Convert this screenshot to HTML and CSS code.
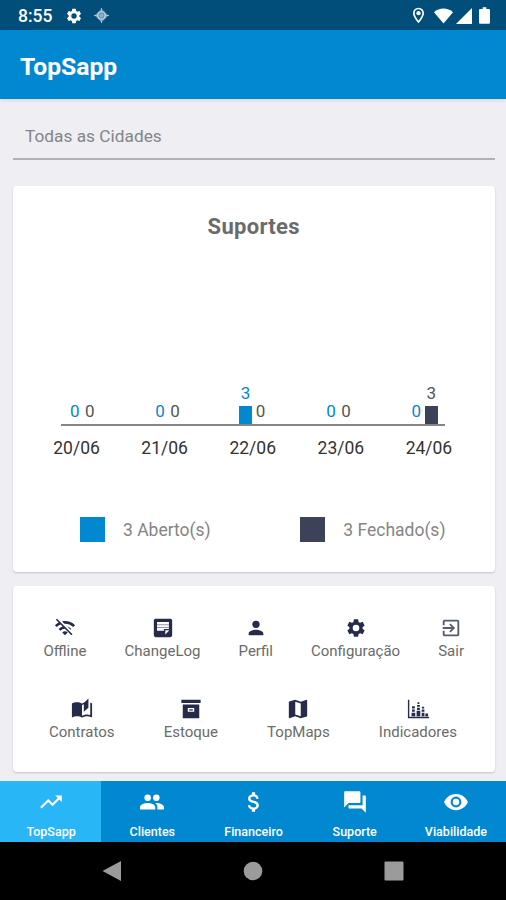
FILE: index.html
```html
<!DOCTYPE html>
<html lang="pt-BR">
<head>
    <meta charset="utf-8">
    <title>TopSapp</title>
    <link rel="stylesheet" href="styles.css">
</head>
<body>
    <div class="status-bar">
        <span class="clock">8:55</span>
        <svg class="status-gear" viewBox="0 0 24 24"><path d="M19.14 12.94c.04-.3.06-.61.06-.94s-.02-.64-.07-.94l2.03-1.58a.5.5 0 0 0 .12-.61l-1.92-3.32a.49.49 0 0 0-.59-.22l-2.39.96a7 7 0 0 0-1.62-.94l-.36-2.54a.48.48 0 0 0-.48-.41h-3.84a.47.47 0 0 0-.47.41l-.36 2.54c-.59.24-1.13.57-1.62.94l-2.39-.96a.48.48 0 0 0-.59.22L2.74 8.87a.47.47 0 0 0 .12.61l2.03 1.58a6 6 0 0 0 0 1.88l-2.03 1.58a.5.5 0 0 0-.12.61l1.92 3.32c.12.22.37.29.59.22l2.39-.96c.5.38 1.03.7 1.62.94l.36 2.54c.05.24.24.41.48.41h3.84c.24 0 .44-.17.47-.41l.36-2.54c.59-.24 1.13-.56 1.62-.94l2.39.96c.22.08.47 0 .59-.22l1.92-3.32a.47.47 0 0 0-.12-.61zM12 15.6a3.6 3.6 0 1 1 0-7.2 3.6 3.6 0 0 1 0 7.2z"/></svg>
        <svg class="status-dot" viewBox="0 0 16 16"><path d="M8 .5 15.5 8 8 15.5.5 8z" opacity=".7"/><circle cx="8" cy="8" r="4" fill="none" stroke="#cfe0ea" stroke-width="1.3"/><circle cx="8" cy="8" r="2.2"/><path d="M8 0v3M8 13v3M0 8h3M13 8h3" stroke="#a9c5d6"/></svg>
        <div class="status-right">
            <svg class="pin" viewBox="0 0 14 18"><path d="M7 1.5c-3 0-5 2.2-5 5 0 3.4 5 9.500 5 9.500s5-6.100 5-9.500c0-2.800-2-5-5-5z" fill="none" stroke="#fff" stroke-width="1.8"/><circle cx="7" cy="6.500" r="2.300"/></svg>
            <svg class="wifi" viewBox="0 0 20 16"><path d="M0 4C5.500-1.300 14.500-1.300 20 4L10 16z"/></svg>
            <svg class="signal" viewBox="0 0 16 16"><path d="M0 16 16 0v16z"/></svg>
            <svg class="battery" viewBox="0 0 12 18"><path d="M4 0h4v2h2.500c.8 0 1.500.6 1.500 1.400v13.200c0 .8-.7 1.400-1.500 1.400h-9C.7 18 0 17.400 0 16.600V3.400C0 2.600.7 2 1.500 2H4z"/></svg>
        </div>
    </div>

    <header class="toolbar"><h1>TopSapp</h1></header>

    <main>
        <div class="city-select">Todas as Cidades</div>

        <section class="card chart-card">
            <h2>Suportes</h2>
            <div class="chart">
                <div class="day">
                    <div class="col open"><span>0</span></div>
                    <div class="col closed"><span>0</span></div>
                </div>
                <div class="day">
                    <div class="col open"><span>0</span></div>
                    <div class="col closed"><span>0</span></div>
                </div>
                <div class="day">
                    <div class="col open"><span>3</span><i class="bar"></i></div>
                    <div class="col closed"><span>0</span></div>
                </div>
                <div class="day">
                    <div class="col open"><span>0</span></div>
                    <div class="col closed"><span>0</span></div>
                </div>
                <div class="day">
                    <div class="col open"><span>0</span></div>
                    <div class="col closed"><span>3</span><i class="bar"></i></div>
                </div>
            </div>
            <div class="axis"></div>
            <div class="dates">
                <span>20/06</span><span>21/06</span><span>22/06</span><span>23/06</span><span>24/06</span>
            </div>
            <div class="legend">
                <div class="legend-item"><i class="swatch open-bg"></i><span>3 Aberto(s)</span></div>
                <div class="legend-item"><i class="swatch closed-bg"></i><span>3 Fechado(s)</span></div>
            </div>
        </section>

        <section class="card menu-card">
            <div class="menu-row">
                <a class="menu-item">
                    <svg viewBox="0 0 24 24"><path d="M22.990 9C19.150 5.160 13.800 3.760 8.840 4.780l2.520 2.520c3.470-.17 6.990 1.050 9.630 3.700l2-2zm-4 4a9.790 9.790 0 0 0-4.490-2.560l3.530 3.530.96-.97zM2 3.050 5.070 6.100C3.600 6.820 2.220 7.780 1 9l1.990 2c1.240-1.240 2.670-2.160 4.200-2.770l2.240 2.240A9.680 9.680 0 0 0 5 13v.01L6.990 15a7.040 7.040 0 0 1 4.920-2.060L18.980 20l1.270-1.260L3.290 1.790 2 3.050zM9 17l3 3 3-3a4.240 4.240 0 0 0-6 0z"/></svg>
                    <span>Offline</span>
                </a>
                <a class="menu-item">
                    <svg viewBox="0 0 24 24"><path fill-rule="evenodd" d="M4 2h16a2 2 0 0 1 2 2v16a2 2 0 0 1-2 2H4a2 2 0 0 1-2-2V4c0-1.100.9-2 2-2zm1.500 3.500V15H13v-2h5.500V5.500zM14.500 19l4.500-4.500h-4.500z"/><path d="M5.500 8h13v1h-13zM5.500 11h13v1h-13z" opacity=".5"/></svg>
                    <span>ChangeLog</span>
                </a>
                <a class="menu-item">
                    <svg viewBox="0 0 24 24"><path d="M12 12a4 4 0 1 0 0-8 4 4 0 0 0 0 8zm0 2c-2.670 0-8 1.340-8 4v2h16v-2c0-2.660-5.330-4-8-4z"/></svg>
                    <span>Perfil</span>
                </a>
                <a class="menu-item">
                    <svg viewBox="0 0 24 24"><path d="M19.140 12.940c.04-.3.06-.61.06-.94s-.02-.64-.07-.94l2.030-1.580a.5.5 0 0 0 .12-.61l-1.920-3.320a.49.49 0 0 0-.59-.22l-2.390.96a7 7 0 0 0-1.620-.94l-.36-2.540a.48.48 0 0 0-.48-.41h-3.840a.47.47 0 0 0-.47.41l-.36 2.540c-.59.24-1.130.57-1.620.94l-2.390-.96a.48.48 0 0 0-.59.22L2.740 8.870a.47.47 0 0 0 .12.61l2.030 1.580a6 6 0 0 0 0 1.880l-2.030 1.580a.5.5 0 0 0-.12.61l1.920 3.320c.12.22.37.29.59.22l2.390-.96c.5.38 1.030.7 1.620.94l.36 2.540c.05.24.24.41.48.41h3.840c.24 0 .44-.17.47-.41l.36-2.540c.59-.24 1.130-.56 1.620-.94l2.390.96c.22.08.47 0 .59-.22l1.920-3.320a.47.47 0 0 0-.12-.61zM12 15.600a3.600 3.600 0 1 1 0-7.200 3.600 3.600 0 0 1 0 7.200z"/></svg>
                    <span>Configuração</span>
                </a>
                <a class="menu-item exit">
                    <svg viewBox="0 0 24 24"><path d="M10.090 15.590 11.500 17l5-5-5-5-1.410 1.410L12.670 11H3v2h9.670zM19 3H5a2 2 0 0 0-2 2v4h2V5h14v14H5v-4H3v4a2 2 0 0 0 2 2h14a2 2 0 0 0 2-2V5a2 2 0 0 0-2-2z"/></svg>
                    <span>Sair</span>
                </a>
            </div>
            <div class="menu-row second">
                <a class="menu-item">
                    <svg viewBox="0 0 24 24"><path d="M17.500 4.500c-1.950 0-4.050.4-5.500 1.500-1.450-1.100-3.550-1.500-5.500-1.500S2.450 4.900 1 6v14.650c0 .25.25.5.5.5.1 0 .15-.05.25-.05C3.100 20.450 5.050 20 6.500 20c1.950 0 4.050.4 5.500 1.500 1.350-.85 3.800-1.500 5.500-1.500 1.650 0 3.350.3 4.750 1.050.1.050.15.05.25.05.25 0 .5-.25.5-.5V6c-.6-.45-1.250-.75-2-1v13.500a11.700 11.700 0 0 0-3.500-.5c-1.700 0-4.150.65-5.500 1.500V8z"/><path d="m19 .5-5 5V15l5-4.500z"/></svg>
                    <span>Contratos</span>
                </a>
                <a class="menu-item">
                    <svg viewBox="0 0 24 24"><path fill-rule="evenodd" d="M1.500 2h21v3.500h-21zM3 7h18v15H3zM8.500 11v4h7v-4z"/><path d="M10 12.300h4v1.400h-4z"/></svg>
                    <span>Estoque</span>
                </a>
                <a class="menu-item">
                    <svg viewBox="0 0 24 24"><path d="m21.500 2-.16.03L15 4.100 9 2 2.360 3.900a.5.5 0 0 0-.36.48V21.500a.5.5 0 0 0 .66.47L9 19.900l6 2.100 6.640-1.900a.5.5 0 0 0 .36-.48V2.500a.5.5 0 0 0-.5-.5zM15 20l-6-2.110V4l6 2.110z"/></svg>
                    <span>TopMaps</span>
                </a>
                <a class="menu-item">
                    <svg viewBox="0 0 24 24"><path d="M1 2v20h23v-1.500H2.500V2zM5 16h4v4H5zM10.500 14h4v6h-4zM16 16h3v4h-3zM20 17h3v3h-3zM5.500 12.500h3V15h-3zM5.500 9h3v2.500h-3zM11 10.500h3V13h-3zM11 7.500h3v2h-3zM11.500 4.500h2v2h-2zM16 12.500h3V15h-3zM16.200 9.500h2.500v2h-2.500z"/></svg>
                    <span>Indicadores</span>
                </a>
            </div>
        </section>
    </main>

    <nav class="tabs">
        <a class="tab active">
            <svg viewBox="0 0 24 24"><path d="m16 6 2.290 2.290-4.880 4.880-4-4L2 16.590 3.410 18l6-6 4 4 6.300-6.290L22 12V6z"/></svg>
            <span>TopSapp</span>
        </a>
        <a class="tab">
            <svg viewBox="0 0 24 24"><path d="M16 11a3 3 0 1 0 0-6 3 3 0 0 0 0 6zm-8 0a3 3 0 1 0 0-6 3 3 0 0 0 0 6zm0 2c-2.330 0-7 1.170-7 3.500V19h14v-2.500c0-2.330-4.670-3.500-7-3.500zm8 0c-.29 0-.62.02-.97.05 1.160.84 1.970 1.970 1.970 3.450V19h6v-2.500c0-2.330-4.670-3.500-7-3.500z"/></svg>
            <span>Clientes</span>
        </a>
        <a class="tab">
            <svg viewBox="0 0 24 24"><path d="M11.800 10.900c-2.270-.59-3-1.200-3-2.150 0-1.090 1.010-1.850 2.700-1.850 1.780 0 2.440.85 2.500 2.100h2.210c-.07-1.720-1.120-3.300-3.210-3.810V3h-3v2.160c-1.940.42-3.500 1.680-3.500 3.610 0 2.310 1.910 3.460 4.700 4.130 2.500.6 3 1.480 3 2.410 0 .69-.49 1.790-2.700 1.790-2.060 0-2.870-.92-2.980-2.100h-2.200c.12 2.190 1.760 3.420 3.680 3.830V21h3v-2.150c1.950-.37 3.500-1.500 3.500-3.550 0-2.840-2.430-3.810-4.700-4.400z"/></svg>
            <span>Financeiro</span>
        </a>
        <a class="tab">
            <svg viewBox="0 0 24 24"><path d="M21 6h-2v9H6v2c0 .55.45 1 1 1h11l4 4V7c0-.55-.45-1-1-1zm-4 6V3c0-.55-.45-1-1-1H3c-.55 0-1 .45-1 1v14l4-4h10c.55 0 1-.45 1-1z"/></svg>
            <span>Suporte</span>
        </a>
        <a class="tab">
            <svg viewBox="0 0 24 24"><path d="M12 4.500C7 4.500 2.730 7.610 1 12c1.730 4.390 6 7.500 11 7.500s9.270-3.110 11-7.500c-1.730-4.390-6-7.500-11-7.500zM12 17a5 5 0 1 1 0-10 5 5 0 0 1 0 10zm0-8a3 3 0 1 0 0 6 3 3 0 0 0 0-6z"/></svg>
            <span>Viabilidade</span>
        </a>
    </nav>

    <div class="system-nav">
        <svg viewBox="0 0 20 20"><path d="M.5 10 19 0v20z"/></svg>
        <svg viewBox="0 0 20 20"><circle cx="10" cy="10" r="9.300"/></svg>
        <svg viewBox="0 0 20 20"><rect x=".5" y=".5" width="19" height="19" rx="1"/></svg>
    </div>
</body>
</html>
```
FILE: styles.css
```css
* {
    box-sizing: border-box;
}
body {
    margin: 0;
    height: 900px;
    display: flex;
    flex-direction: column;
    background-color: #eeeef3;
    font-family: Roboto, sans-serif;
    overflow: hidden;
}
svg {
    display: block;
    fill: currentColor;
}

/* Android status bar */
.status-bar {
    height: 30px;
    display: flex;
    align-items: center;
    padding: 1px 16px 0 18px;
    background-color: #004e79;
    color: #fff;
}
.clock {
    width: 47px;
    font-size: 17.5px;
    font-weight: 500;
}
.status-gear {
    width: 18px;
    height: 18px;
    margin-right: 11px;
}
.status-dot {
    width: 15px;
    height: 15px;
    color: #8fb0c4;
}
.status-right {
    display: flex;
    align-items: center;
    margin-left: auto;
}
.pin {
    width: 13px;
    height: 17px;
    margin-right: 9px;
}
.wifi {
    width: 19px;
    height: 16px;
    margin-right: 3px;
}
.signal {
    width: 16px;
    height: 16px;
    margin-right: 7px;
}
.battery {
    width: 11px;
    height: 17px;
}

.toolbar {
    height: 69px;
    display: flex;
    align-items: center;
    padding: 3px 20px 0;
    background-color: #0288d1;
    box-shadow: 0 1px 4px rgba(0, 0, 0, 0.12);
    color: #fff;
}
.toolbar h1 {
    margin: 0;
    font-size: 24.7px;
    font-weight: 700;
}

main {
    height: 682px;
    padding: 14px 11.5px 0 13px;
}
.city-select {
    height: 47px;
    padding: 0 12px;
    border-bottom: 2px solid #b0b0b5;
    color: #85858a;
    font-size: 17.3px;
    line-height: 46px;
}
.card {
    background-color: #fff;
    border-radius: 4px;
    box-shadow: 0 1px 2px rgba(0, 0, 0, 0.18);
}

/* Chart */
.chart-card {
    height: 386px;
    margin: 26px 0 14px;
    padding-top: 26px;
}
.chart-card h2 {
    margin: 0;
    color: #6b6b6b;
    font-size: 22px;
    font-weight: 700;
    line-height: 30px;
    letter-spacing: 0.3px;
    text-align: center;
}
.chart {
    display: flex;
    height: 182px;
    padding: 0 28px 0 26.5px;
}
.day {
    flex: 1;
    display: flex;
    justify-content: center;
    align-items: flex-end;
    gap: 2px;
}
.col {
    width: 13px;
    display: flex;
    flex-direction: column;
    align-items: center;
    font-size: 17px;
    line-height: 18px;
}
.col span {
    padding-bottom: 4px;
}
.bar {
    width: 13px;
    height: 18px;
    background-color: currentColor;
}
.open {
    color: #0288d1;
}
.closed {
    color: #3c4359;
}
.closed span {
    color: #555;
}
.open-bg {
    background-color: #0288d1;
}
.closed-bg {
    background-color: #3c4359;
}
.axis {
    height: 2px;
    margin: 0 50px 0 48px;
    background-color: #858585;
}
.dates {
    display: flex;
    padding: 11px 21.5px 0 19.5px;
    color: #333;
    font-size: 17.5px;
    line-height: 22px;
    text-align: center;
}
.dates span {
    flex: 1;
}
.legend {
    display: flex;
    justify-content: space-between;
    padding: 58px 49px 0 67px;
}
.legend-item {
    display: flex;
    align-items: center;
    gap: 18px;
    color: #858585;
    font-size: 17.5px;
}
.swatch {
    width: 25px;
    height: 25px;
}

/* Menu */
.menu-card {
    height: 186px;
    padding: 31px 30.5px 0;
}
.menu-row {
    display: flex;
    justify-content: space-between;
}
.menu-row.second {
    margin-top: 38px;
    padding: 0 7px 0 5.5px;
}
.menu-item {
    display: flex;
    flex-direction: column;
    align-items: center;
    color: #252b48;
}
.menu-item svg {
    width: 22px;
    height: 22px;
}
.menu-item span {
    margin-top: 3px;
    color: #6b6b6b;
    font-size: 15px;
    line-height: 18px;
}
.menu-item.exit {
    color: #555b70;
}

/* Bottom tabs */
.tabs {
    height: 61px;
    display: flex;
    background-color: #0288d1;
    color: #fff;
}
.tab {
    flex: 1;
    display: flex;
    flex-direction: column;
    align-items: center;
    padding: 8px 0 0 1px;
}
.tab.active {
    background-color: #29b6f6;
}
.tab svg {
    width: 26px;
    height: 26px;
}
.tab span {
    margin-top: 9px;
    font-size: 12.5px;
    font-weight: 500;
    line-height: 15px;
}

.system-nav {
    height: 58px;
    display: flex;
    justify-content: space-between;
    padding: 19px 102px 0;
    background-color: #000;
    color: #9b9b9b;
}
.system-nav svg {
    width: 20px;
    height: 20px;
}
```
